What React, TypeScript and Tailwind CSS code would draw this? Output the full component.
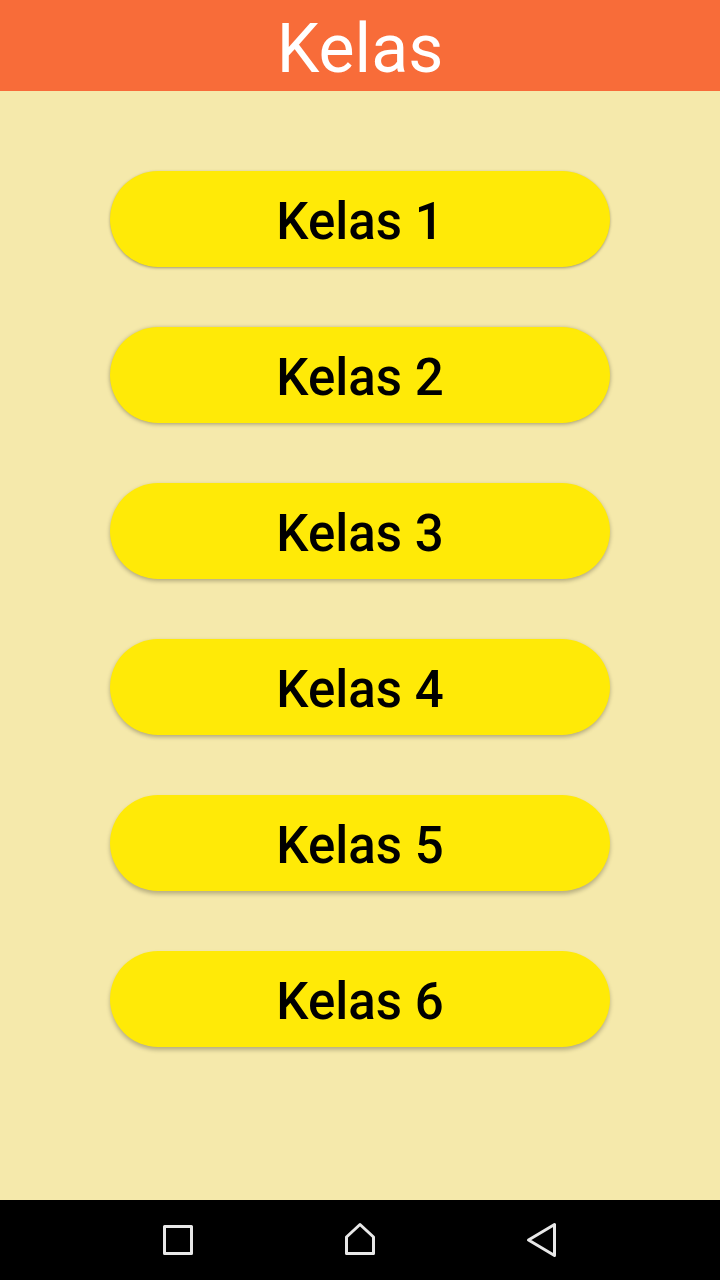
import React from "react";

const classes = [
  { level: 1, shadow: "shadow-[0_1px_3px_rgba(0,0,0,0.34)]" },
  { level: 2, shadow: "shadow-[0_1px_4px_rgba(0,0,0,0.34)]" },
  { level: 3, shadow: "shadow-[0_2px_4px_rgba(0,0,0,0.28)]" },
  { level: 4, shadow: "shadow-[0_2px_4px_rgba(0,0,0,0.28)]" },
  { level: 5, shadow: "shadow-[0_3px_4px_rgba(0,0,0,0.25)]" },
  { level: 6, shadow: "shadow-[0_3px_4px_rgba(0,0,0,0.25)]" },
];

function NavigationBar() {
  return (
    <nav aria-label="System navigation" className="flex h-20 items-center justify-around bg-black px-[87px] text-[#e8e8e8]">
      <button type="button" aria-label="Recent apps">
        <svg className="size-10" viewBox="0 0 40 40" fill="none" stroke="currentColor" strokeWidth="3">
          <rect x="6.5" y="6.5" width="27" height="27" strokeLinejoin="round" />
        </svg>
      </button>
      <button type="button" aria-label="Home">
        <svg className="size-10" viewBox="0 0 40 40" fill="none" stroke="currentColor" strokeWidth="3" strokeLinejoin="round">
          <path d="M6.5 33.5V17L20 4.5L33.5 17V33.5Z" />
        </svg>
      </button>
      <button type="button" aria-label="Back">
        <svg className="size-10" viewBox="0 0 40 40" fill="none" stroke="currentColor" strokeWidth="3" strokeLinejoin="round">
          <path d="M32.5 4.5V35.5L6.5 20Z" />
        </svg>
      </button>
    </nav>
  );
}

export default function App() {
  return (
    <div className="flex min-h-screen flex-col bg-[#f5e9ab] font-['Roboto',sans-serif]">
      <header className="bg-[#f86c39] pt-2.5 pb-0.5">
        <h1 className="text-center text-[68px] leading-[79px] font-normal text-white">Kelas</h1>
      </header>
      <main className="flex grow flex-col items-center gap-[60px] px-[110px] pt-20">
        {classes.map(({ level, shadow }) => (
          <button
            key={level}
            type="button"
            className={`h-24 w-full rounded-full bg-[#ffea07] pt-1.5 text-[51px] leading-[60px] font-medium text-black ${shadow}`}
          >
            Kelas {level}
          </button>
        ))}
      </main>
      <NavigationBar />
    </div>
  );
}
